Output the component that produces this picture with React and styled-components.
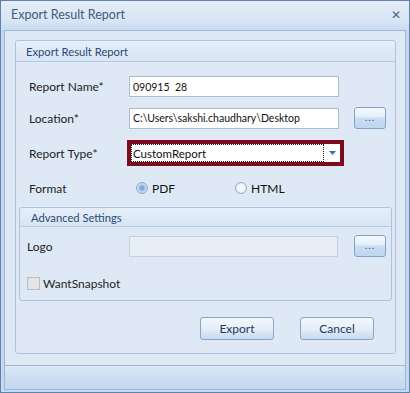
import React from "react";
import styled, { createGlobalStyle } from "styled-components";

const Global = createGlobalStyle`
  html, body { margin: 0; padding: 0; background: #fff; }
  body { font-family: Lato, "Noto Sans", sans-serif; }
  * { box-sizing: border-box; }
`;

const Window = styled.div`
  width: 410px;
  height: 393px;
  border: 1px solid #5f82ae;
  background: #c6d8ee;
  display: flex;
  flex-direction: column;
  font-family: Lato, "Noto Sans", sans-serif;
  font-size: 12px;
  color: #1e1e1e;
`;

const TitleBar = styled.div`
  height: 29px;
  flex: none;
  display: flex;
  align-items: center;
  justify-content: space-between;
  padding: 0 8px 2px 10px;
  background: linear-gradient(#e4edf8, #d8e5f5 70%, #cadbf0);
`;

const Title = styled.span`
  font-size: 12.5px;
  color: #3e5a80;
`;

const Close = styled.span`
  font-family: "DejaVu Sans", sans-serif;
  font-size: 12px;
  font-weight: bold;
  color: #4f6785;
`;

const Client = styled.div`
  flex: 1;
  margin: 0 3px 2px;
  border: 1px solid #9db6d6;
  background: #dfe9f6;
  display: flex;
  flex-direction: column;
`;

const Content = styled.div`
  flex: 1;
  padding: 9px 9px 0 10px;
`;

const Group = styled.div`
  border: 1px solid #aec3dd;
  border-radius: 3px;
  margin: ${(p) => p.$margin || "0"};
  background: #dfe9f6;
`;

const GroupHeader = styled.div`
  height: ${(p) => p.$h}px;
  display: flex;
  align-items: center;
  padding-left: ${(p) => p.$pl}px;
  background: linear-gradient(#e6eef9, #d8e5f5);
  border-bottom: 1px solid #b7cae2;
  border-radius: 3px 3px 0 0;
  color: #2c4a72;
  font-size: 11.2px;
`;

const GroupBody = styled.div`
  display: flex;
  flex-direction: column;
  padding: ${(p) => p.$padding};
`;

const Row = styled.div`
  display: flex;
  align-items: center;
  height: ${(p) => p.$h}px;
  margin-top: ${(p) => p.$mt}px;
  padding-left: ${(p) => p.$pl || 0}px;
`;

const Label = styled.span`
  width: ${(p) => p.$w}px;
  flex: none;
  color: #1e1e1e;
`;

const Input = styled.div`
  width: ${(p) => p.$w}px;
  height: 21px;
  border: 1px solid ${(p) => (p.$disabled ? "#c4d0de" : "#abbdd3")};
  background: ${(p) => (p.$disabled ? "#e8eef6" : "#ffffff")};
  padding-left: 3px;
  display: flex;
  align-items: center;
  white-space: pre;
  overflow: hidden;
  font-size: 10.5px;
  color: #111;
`;

const DotsButton = styled.div`
  width: 32px;
  height: 22px;
  margin-left: ${(p) => p.$ml}px;
  border: 1px solid #86a3c7;
  border-radius: 3px;
  background: linear-gradient(#f4f8fd 0%, #e4eef9 45%, #c9ddf3 50%, #bfd6f1 100%);
  display: flex;
  align-items: center;
  justify-content: center;
  color: #3a4d66;
  font-size: 10px;
  letter-spacing: 1px;
  padding-bottom: 3px;
`;

const Combo = styled.div`
  margin-left: -2px;
  width: 217px;
  height: 26px;
  border: 4px solid #7c0b1d;
  background: #fff;
  display: flex;
  align-items: stretch;
`;

const ComboText = styled.div`
  flex: 1;
  border: 1px dotted #222;
  display: flex;
  align-items: center;
  padding-left: 1px;
  font-size: 11.5px;
  color: #111;
`;

const ComboArrow = styled.div`
  width: 16px;
  display: flex;
  align-items: center;
  justify-content: center;
`;

const RadioGroup = styled.div`
  display: flex;
  padding-left: 7px;
`;

const RadioOption = styled.label`
  display: flex;
  align-items: center;
  width: 99px;
  gap: 4px;
  color: #111;
`;

const RadioCircle = styled.span`
  width: 12px;
  height: 12px;
  border-radius: 50%;
  border: 1px solid #8ea9c9;
  background: ${(p) =>
    p.$checked
      ? "radial-gradient(circle, #7fa8d8 0 2px, #a9c7ec 3px, #d6e5f6 5px)"
      : "radial-gradient(circle, #f4f7fb 0 3px, #dfe7f1 6px)"};
  box-shadow: inset 0 0 0 1px ${(p) => (p.$checked ? "#c7daf1" : "#eef2f7")};
`;

const CheckBox = styled.span`
  width: 13px;
  height: 13px;
  border: 1px solid #bdbdbd;
  background: #e4e4e4;
  margin-right: 3px;
  flex: none;
`;

const ButtonBar = styled.div`
  display: flex;
  justify-content: flex-end;
  gap: 26px;
  padding: 16px 21px 13px 0;
`;

const Button = styled.div`
  width: 74px;
  height: 23px;
  border: 1px solid #8aa5c7;
  border-radius: 3px;
  background: linear-gradient(#f3f7fc 0%, #e6eef8 50%, #d7e4f4 75%, #c6daf2 100%);
  display: flex;
  align-items: center;
  justify-content: center;
  color: #1f3a5f;
`;

const StatusStrip = styled.div`
  height: 24px;
  flex: none;
  border-top: 1px solid #a3b7cf;
  background: linear-gradient(#d9e6f6, #c3d7f0);
`;

export default function App() {
  return (
    <>
      <Global />
      <Window>
        <TitleBar>
          <Title>Export Result Report</Title>
          <Close>✕</Close>
        </TitleBar>
        <Client>
          <Content>
            <Group>
              <GroupHeader $h={21} $pl={10}>Export Result Report</GroupHeader>
              <GroupBody $padding="0">
                <Row $h={21} $mt={14} $pl={13}>
                  <Label $w={100}>Report Name*</Label>
                  <Input $w={210}>090915  28</Input>
                </Row>
                <Row $h={22} $mt={10} $pl={13}>
                  <Label $w={100}>Location*</Label>
                  <Input $w={210}>C:\Users\sakshi.chaudhary\Desktop</Input>
                  <DotsButton $ml={15}>...</DotsButton>
                </Row>
                <Row $h={26} $mt={11} $pl={13}>
                  <Label $w={100}>Report Type*</Label>
                  <Combo>
                    <ComboText>CustomReport</ComboText>
                    <ComboArrow>
                      <svg width="7" height="4" viewBox="0 0 7 4">
                        <path d="M0 0h7L3.5 4z" fill="#4e6d95" />
                      </svg>
                    </ComboArrow>
                  </Combo>
                </Row>
                <Row $h={16} $mt={14} $pl={13}>
                  <Label $w={100}>Format</Label>
                  <RadioGroup>
                    <RadioOption>
                      <RadioCircle $checked />
                      PDF
                    </RadioOption>
                    <RadioOption>
                      <RadioCircle />
                      HTML
                    </RadioOption>
                  </RadioGroup>
                </Row>
                <Group $margin="11px 3px 0">
                  <GroupHeader $h={19} $pl={11}>Advanced Settings</GroupHeader>
                  <GroupBody $padding="0 0 10px 7px">
                    <Row $h={22} $mt={8}>
                      <Label $w={102}>Logo</Label>
                      <Input $w={209} $disabled />
                      <DotsButton $ml={16}>...</DotsButton>
                    </Row>
                    <Row $h={14} $mt={19}>
                      <CheckBox />
                      <span>WantSnapshot</span>
                    </Row>
                  </GroupBody>
                </Group>
                <ButtonBar>
                  <Button>Export</Button>
                  <Button>Cancel</Button>
                </ButtonBar>
              </GroupBody>
            </Group>
          </Content>
          <StatusStrip />
        </Client>
      </Window>
    </>
  );
}
